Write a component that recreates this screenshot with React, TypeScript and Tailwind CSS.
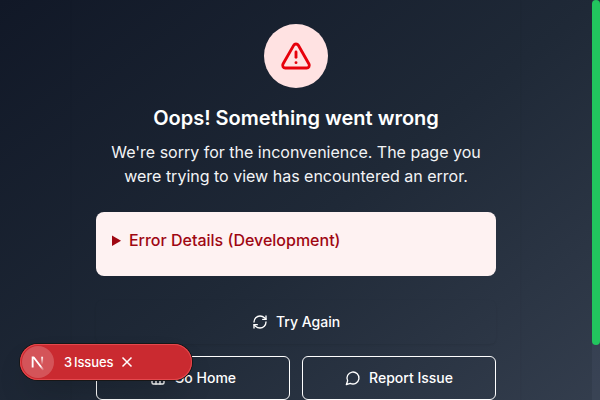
import React from "react";
import { TriangleAlert, RefreshCw, House } from "lucide-react";

function ChatIcon() {
  return (
    <svg className="size-4" viewBox="0 0 24 24" fill="none" stroke="currentColor" strokeWidth="2" strokeLinecap="round" strokeLinejoin="round">
      <path d="M7.9 20A9 9 0 1 0 4 16.1L2 22Z" />
    </svg>
  );
}

function IssuesBadge() {
  return (
    <div className="absolute left-5 top-[344px] flex h-9 w-[172px] items-center rounded-full bg-[#ca2a30] pl-0.5 text-white shadow-[0_0_0_1px_#171717,inset_0_0_0_1px_#e5484d,0_16px_32px_-8px_rgba(0,0,0,0.24)]">
      <svg className="size-8 rounded-full bg-white/20" viewBox="0 0 32 32" fill="none">
        <defs>
          <linearGradient id="diagonal" x1="9.96" y1="11.12" x2="15.48" y2="17.97" gradientUnits="userSpaceOnUse">
            <stop stopColor="white" />
            <stop offset="0.604" stopColor="white" stopOpacity="0" />
          </linearGradient>
          <linearGradient id="stem" x1="11.82" y1="1.4" x2="11.79" y2="9.63" gradientUnits="userSpaceOnUse">
            <stop stopColor="white" />
            <stop offset="1" stopColor="white" stopOpacity="0" />
          </linearGradient>
          <clipPath id="mark">
            <rect x="0" y="1.5" width="16" height="16" />
          </clipPath>
        </defs>
        <g transform="translate(8.3 9)" clipPath="url(#mark)" strokeWidth="1.86">
          <path d="M13.3 15.2 2.34 1V12.6" stroke="url(#diagonal)" />
          <path d="M11.825 1.5V13.1" stroke="url(#stem)" />
        </g>
      </svg>
      <div className="ml-2.5 flex gap-[2px] text-[13px] font-medium leading-4 tracking-[-0.01em]">
        <span>3</span>
        <span>Issues</span>
      </div>
      <svg className="ml-2" width="12" height="12" viewBox="0 0 12 12" fill="none" stroke="white" strokeWidth="1.5">
        <path d="M1.5 1.5 10.5 10.5M10.5 1.5 1.5 10.5" />
      </svg>
    </div>
  );
}

export default function App() {
  return (
    <div className="relative h-[400px] w-[600px] overflow-hidden font-['Inter',sans-serif] text-white">
      <div className="flex h-[464px] w-full bg-linear-to-br from-[#111827] via-[#1f2937] to-[#374151]">
        <main className="flex w-[592px] justify-center">
          <div className="h-[464px] w-[448px] shrink-0 p-6 text-center shadow-[0_1px_3px_rgba(0,0,0,0.06)]">
            <div className="mx-auto flex size-16 items-center justify-center rounded-full bg-[#ffe2e2]">
              <TriangleAlert className="size-8 text-[#e7000b]" strokeWidth={2.15} />
            </div>
            <h1 className="mt-4 text-xl font-semibold">Oops! Something went wrong</h1>
            <p className="mt-2 text-base text-gray-100">
              We're sorry for the inconvenience. The page you were trying to view has encountered an error.
            </p>
            <details className="mt-6 h-16 rounded-lg bg-[#fef2f2] p-4 text-left text-[#9f0712]">
              <summary className="mb-2 cursor-pointer font-medium">Error Details (Development)</summary>
            </details>
            <button className="mt-6 flex h-11 w-full items-center justify-center gap-2 rounded-md text-sm font-medium shadow-[0_1px_2px_rgba(0,0,0,0.08)]">
              <RefreshCw className="size-4" />
              Try Again
            </button>
            <div className="mt-3 grid grid-cols-2 gap-3">
              <button className="flex h-11 items-center justify-center gap-2 rounded-md border border-white text-sm font-medium">
                <House className="size-4" />
                Go Home
              </button>
              <button className="flex h-11 items-center justify-center gap-2 rounded-md border border-white text-sm font-medium">
                <ChatIcon />
                Report Issue
              </button>
            </div>
          </div>
        </main>
        <div className="w-2 bg-[#8090b8]/8">
          <div className="h-[345px] rounded-full bg-[#22c55e]" />
        </div>
      </div>
      <IssuesBadge />
    </div>
  );
}
